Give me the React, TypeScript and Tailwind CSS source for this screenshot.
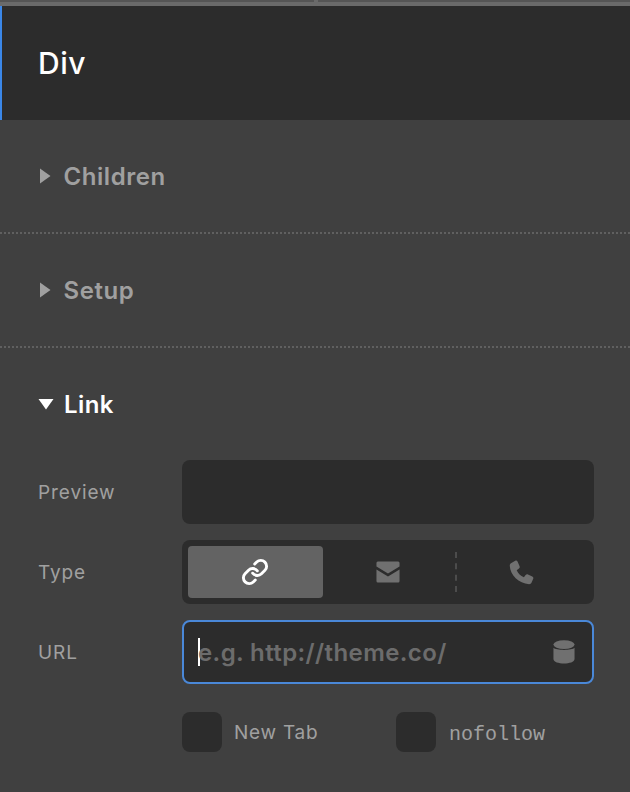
import { Link } from "lucide-react"

function Section({ title }: { title: string }) {
  return (
    <div className="h-[114px] border-b-2 border-dotted border-[#606060] pl-[39px] pt-[41px]">
      <div className="flex h-[32px] items-center">
        <svg width="12" height="16" viewBox="0 0 12 16" className="mr-[13px] mt-[-2px]">
          <path d="M1 0.5 L11.5 8 L1 15.5 Z" fill="#a0a0a0" />
        </svg>
        <span className="ml-[-0.5px] text-[24px] font-semibold tracking-[0.55px] text-[#a0a0a0]">{title}</span>
      </div>
    </div>
  )
}

function Row({ label, children }: { label: string; children: React.ReactNode }) {
  return (
    <div className="flex h-[64px] items-center">
      <span className="mt-[2px] w-[144px] text-[19px] tracking-[0.9px] text-[#a0a0a0]">{label}</span>
      <div className="h-full w-[412px]">{children}</div>
    </div>
  )
}

export default function App() {
  return (
    <div className="h-[792px] w-[630px] overflow-hidden bg-[#404040] font-['Inter',sans-serif]">
      <div className="flex h-[6px] gap-[4px] bg-[#6a6a6a]">
        <div className="h-[2px] w-[314px] bg-[#555555]" />
        <div className="h-[2px] flex-1 bg-[#555555]" />
      </div>
      <div className="flex h-[114px] items-center border-l-2 border-[#3b87e8] bg-[#2c2c2c] pl-[36px]">
        <span className="text-[30px] font-medium tracking-[0.5px] text-white">Div</span>
      </div>
      <Section title="Children" />
      <Section title="Setup" />
      <div className="pl-[38px] pt-[41px]">
        <div className="flex h-[32px] items-center">
          <svg width="16" height="12" viewBox="0 0 16 12" className="mr-[10px] mt-[-2px]">
            <path d="M0.5 1 L15.5 1 L8 11.5 Z" fill="#ffffff" />
          </svg>
          <span className="text-[24px] font-semibold tracking-[0.4px] text-white">Link</span>
        </div>
        <div className="mt-[39px] flex flex-col gap-[16px]">
          <Row label="Preview">
            <div className="h-full rounded-[8px] bg-[#2c2c2c]" />
          </Row>
          <Row label="Type">
            <div className="flex h-full items-center rounded-[8px] bg-[#2c2c2c] p-[6px]">
              <div className="flex h-[52px] w-[135px] items-center justify-center rounded-[4px] bg-[#636363] pr-[1px]">
                <Link size={28} strokeWidth={2.5} className="text-white" />
              </div>
              <div className="flex h-full w-[132px] items-center justify-center pr-[2px]">
                <svg width="24" height="22" viewBox="0 0 26 22" preserveAspectRatio="none">
                  <path d="M2 0.5 H24 A1.5 1.5 0 0 1 25.5 2 V5.5 L13 12.5 L0.5 5.5 V2 A1.5 1.5 0 0 1 2 0.5 Z" fill="#707070" />
                  <path d="M0.5 8.5 L13 15.5 L25.5 8.5 V20 A1.5 1.5 0 0 1 24 21.5 H2 A1.5 1.5 0 0 1 0.5 20 Z" fill="#707070" />
                </svg>
              </div>
              <div className="flex h-[40px] flex-1 items-center justify-center border-l-2 border-dashed border-[#4c4c4c] pr-[3px]">
                <svg width="25" height="25" viewBox="0 0 26 26">
                  <path d="M2 3.5 L6.5 0.8 C7.5 0.3 8.5 0.7 9 1.7 L11 6.5 C11.4 7.4 11.1 8.3 10.4 8.8 L8 10.6 C9.5 14 12 16.5 15.5 18 L17.3 15.7 C17.9 15 18.8 14.7 19.7 15.1 L24.2 17.2 C25.2 17.7 25.6 18.7 25.2 19.6 L23.5 23.5 C23 24.6 22 25.2 21 25.2 C10 24.5 1.3 15.5 0.8 6 C0.8 5 1.2 4 2 3.5 Z" fill="#707070" />
                </svg>
              </div>
            </div>
          </Row>
          <Row label="URL">
            <div className="flex h-full items-center rounded-[8px] border-2 border-[#4a88d8] bg-[#2c2c2c] pl-[14px] pr-[17px]">
              <div className="h-[28px] w-[2px] bg-white" />
              <span className="ml-[-2px] mt-[2px] flex-1 text-[24px] font-semibold tracking-[0.4px] text-[#6c6c6c]">e.g. http://theme.co/</span>
              <svg width="22" height="24" viewBox="0 0 24 26" preserveAspectRatio="none">
                <ellipse cx="12" cy="5" rx="11.5" ry="4.8" fill="#707070" />
                <path d="M0.5 8.5 C3 11.5 21 11.5 23.5 8.5 V20.5 C23.5 27 0.5 27 0.5 20.5 Z" fill="#707070" />
              </svg>
            </div>
          </Row>
        </div>
        <div className="ml-[144px] mt-[28px] flex items-center">
          <div className="h-[40px] w-[40px] rounded-[8px] bg-[#2c2c2c]" />
          <span className="ml-[12px] mt-[2px] w-[162px] text-[19px] tracking-[0.75px] text-[#a0a0a0]">New Tab</span>
          <div className="h-[40px] w-[40px] rounded-[8px] bg-[#2c2c2c]" />
          <span className="ml-[13px] mt-[6px] font-['Liberation_Mono',monospace] text-[20px] text-[#a0a0a0]">nofollow</span>
        </div>
      </div>
    </div>
  )
}
